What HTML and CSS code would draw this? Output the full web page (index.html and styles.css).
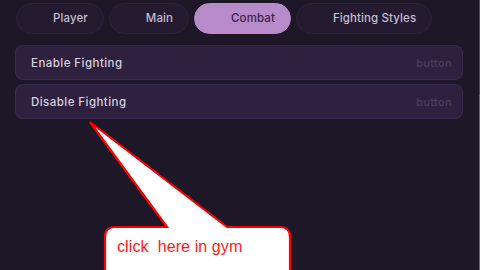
FILE: index.html
```html
<!DOCTYPE html>
<html>
<head>
<meta charset="utf-8">
<link rel="stylesheet" href="styles.css">
</head>
<body>
<div class="app">
  <main class="content">
    <nav class="tabs">
      <div class="tab">Player</div>
      <div class="tab">Main</div>
      <div class="tab active">Combat</div>
      <div class="tab">Fighting Styles</div>
    </nav>
    <div class="list">
      <div class="row"><span class="label">Enable Fighting</span><span class="kind">button</span></div>
      <div class="row"><span class="label">Disable Fighting</span><span class="kind">button</span></div>
    </div>
  </main>
  <div class="edge"></div>
</div>
<div class="callout">
  <svg width="220" height="160" viewBox="0 0 220 160">
    <path d="M 63 106 L -14 1 L 123 106 L 176 106 Q 186 106 186 116 L 186 160 L 1 160 L 1 116 Q 1 106 11 106 Z" transform="translate(104,0)" fill="#ffffff" stroke="#ff0000" stroke-width="2.2" stroke-linejoin="miter"/>
  </svg>
  <span class="callout-text">click&nbsp; here in gym</span>
</div>
</body>
</html>
```
FILE: styles.css
```css
html, body {
  margin: 0;
  padding: 0;
  background: #1d1728;
  width: 480px;
  height: 270px;
  overflow: hidden;
}
.app {
  display: flex;
  width: 480px;
  height: 270px;
}
.content {
  flex: 1;
  padding: 3px 16px 0 15px;
  font-family: Inter, "Noto Sans", sans-serif;
  font-weight: 500;
}
.edge {
  width: 1px;
  background: linear-gradient(to bottom, #2c5a6a 0, #2c5a6a 95px, #6a6476 95px, #6a6476 100%);
}
.tabs {
  display: flex;
  gap: 5px;
  margin-left: 1px;
}
.tab {
  height: 29px;
  line-height: 29px;
  padding: 0 15px 0 36px;
  border-radius: 16px;
  background: #241b31;
  border: 1px solid #2c2239;
  color: #c6bccf;
  font-size: 11.5px;
  letter-spacing: 0.1px;
  white-space: nowrap;
}
.tab.active {
  background: #b78ac9;
  border-color: #b78ac9;
  color: #3b2346;
}
.list {
  margin-top: 11px;
  display: flex;
  flex-direction: column;
  gap: 4px;
}
.row {
  height: 33px;
  border: 1px solid #3a2c4e;
  border-top-color: #34284a;
  border-radius: 8px;
  background: #2e2140;
  display: flex;
  align-items: center;
  justify-content: space-between;
  padding: 0 10px 0 15px;
}
.label {
  color: #d8d0df;
  font-size: 11.5px;
  letter-spacing: 0.45px;
}
.kind {
  color: #4b3d5e;
  font-size: 11px;
  letter-spacing: 0.35px;
}
.callout {
  position: absolute;
  left: 0;
  top: 121px;
  width: 300px;
  height: 149px;
}
.callout svg {
  position: absolute;
  left: 0;
  top: 0;
  overflow: visible;
}
.callout-text {
  position: absolute;
  left: 117px;
  top: 117px;
  font-family: "Liberation Sans", Arial, sans-serif;
  font-size: 16px;
  letter-spacing: 0.1px;
  color: #ff1a1a;
  white-space: nowrap;
}
```
